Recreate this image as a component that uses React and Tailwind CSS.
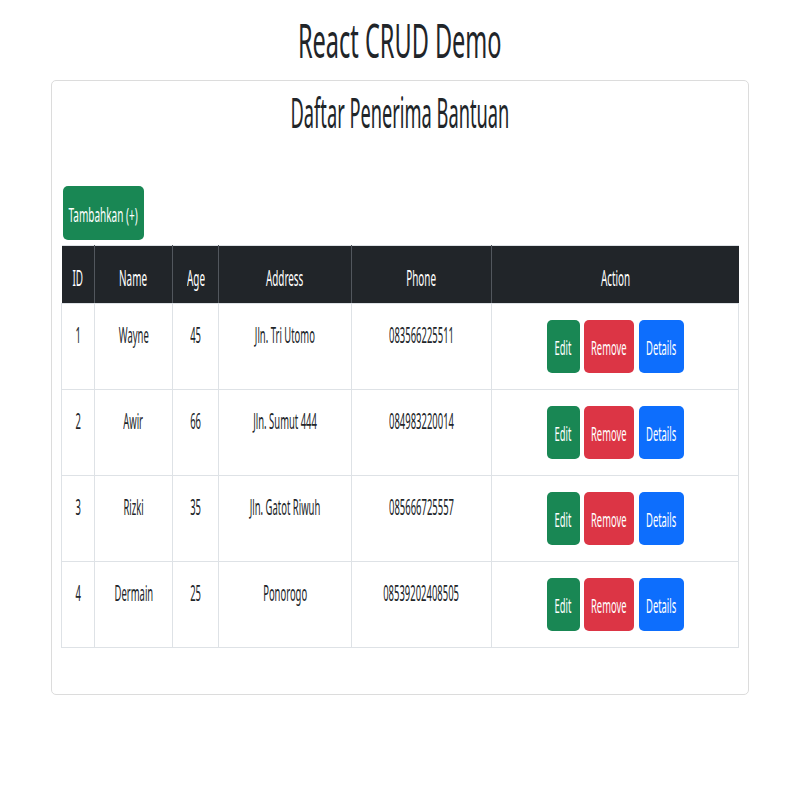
import React from "react";

const rows = [
  { id: 1, name: "Wayne", age: 45, address: "Jln. Tri Utomo", phone: "083566225511" },
  { id: 2, name: "Awir", age: 66, address: "Jln. Sumut 444", phone: "084983220014" },
  { id: 3, name: "Rizki", age: 35, address: "Jln. Gatot Riwuh", phone: "085666725557" },
  { id: 4, name: "Dermain", age: 25, address: "Ponorogo", phone: "08539202408505" },
];

function Cell({ children }) {
  return (
    <td className="border border-[#dee2e6] p-0 align-top">
      <div className="flex justify-center pt-[14px] leading-[33px] text-[22px]">
        <span className="inline-block whitespace-nowrap scale-x-[0.43]">{children}</span>
      </div>
    </td>
  );
}

function Th({ children, last }) {
  return (
    <th className={"p-0 align-top font-normal border-y border-[#dee2e6] " + (last ? "" : "border-r-[#52575d] border-r")}>
      <div className="flex justify-center pt-[15px] leading-[33px] text-[22px] text-white">
        <span className="inline-block whitespace-nowrap scale-x-[0.45]">{children}</span>
      </div>
    </th>
  );
}

function Btn({ w, bg, children }) {
  return (
    <div className={`${w} ${bg} h-[53px] rounded-[5px] flex items-center justify-center`}>
      <span className="inline-block whitespace-nowrap scale-x-[0.47] pt-[3px]">{children}</span>
    </div>
  );
}

export default function App() {
  return (
    <div className="w-[800px] h-[800px] bg-white text-[#212529]" style={{ fontFamily: '"Noto Sans", "Open Sans", sans-serif' }}>
      <div className="h-[80px] leading-[80px] text-[48px] flex justify-center">
        <span className="inline-block whitespace-nowrap scale-x-[0.49]">React CRUD Demo</span>
      </div>
      <div className="ml-[51px] w-[698px] h-[615px] border border-[#dcdcdc] rounded-[5px] px-[9px]">
        <div className="h-[62px] leading-[62px] text-[41px] flex justify-center">
          <span className="inline-block whitespace-nowrap scale-x-[0.445]">Daftar Penerima Bantuan</span>
        </div>
        <div className="mt-[43px] ml-[2px]">
          <div className="w-[81px] h-[54px] rounded-[5px] bg-[#198754] text-white text-[20px] flex items-center justify-center">
            <span className="inline-block whitespace-nowrap scale-x-[0.5] pt-[3px]">Tambahkan (+)</span>
          </div>
        </div>
        <table className="mt-[5px] table-fixed border-collapse w-[677px]">
          <colgroup>
            <col className="w-[33px]" />
            <col className="w-[78px]" />
            <col className="w-[46px]" />
            <col className="w-[133px]" />
            <col className="w-[140px]" />
            <col className="w-[247px]" />
          </colgroup>
          <thead className="bg-[#212529]">
            <tr className="h-[58px]">
              <Th>ID</Th>
              <Th>Name</Th>
              <Th>Age</Th>
              <Th>Address</Th>
              <Th>Phone</Th>
              <Th last>Action</Th>
            </tr>
          </thead>
          <tbody>
            {rows.map((r) => (
              <tr key={r.id} className="h-[86px]">
                <Cell>{r.id}</Cell>
                <Cell>{r.name}</Cell>
                <Cell>{r.age}</Cell>
                <Cell>{r.address}</Cell>
                <Cell>{r.phone}</Cell>
                <td className="border border-[#dee2e6] p-0 align-top">
                  <div className="flex justify-center pt-[16px] text-white text-[20px]">
                    <Btn w="w-[33px]" bg="bg-[#198754]">Edit</Btn>
                    <div className="w-[4px]" />
                    <Btn w="w-[50px]" bg="bg-[#dc3545]">Remove</Btn>
                    <div className="w-[5px]" />
                    <Btn w="w-[45px]" bg="bg-[#0d6efd]">Details</Btn>
                  </div>
                </td>
              </tr>
            ))}
          </tbody>
        </table>
      </div>
    </div>
  );
}
